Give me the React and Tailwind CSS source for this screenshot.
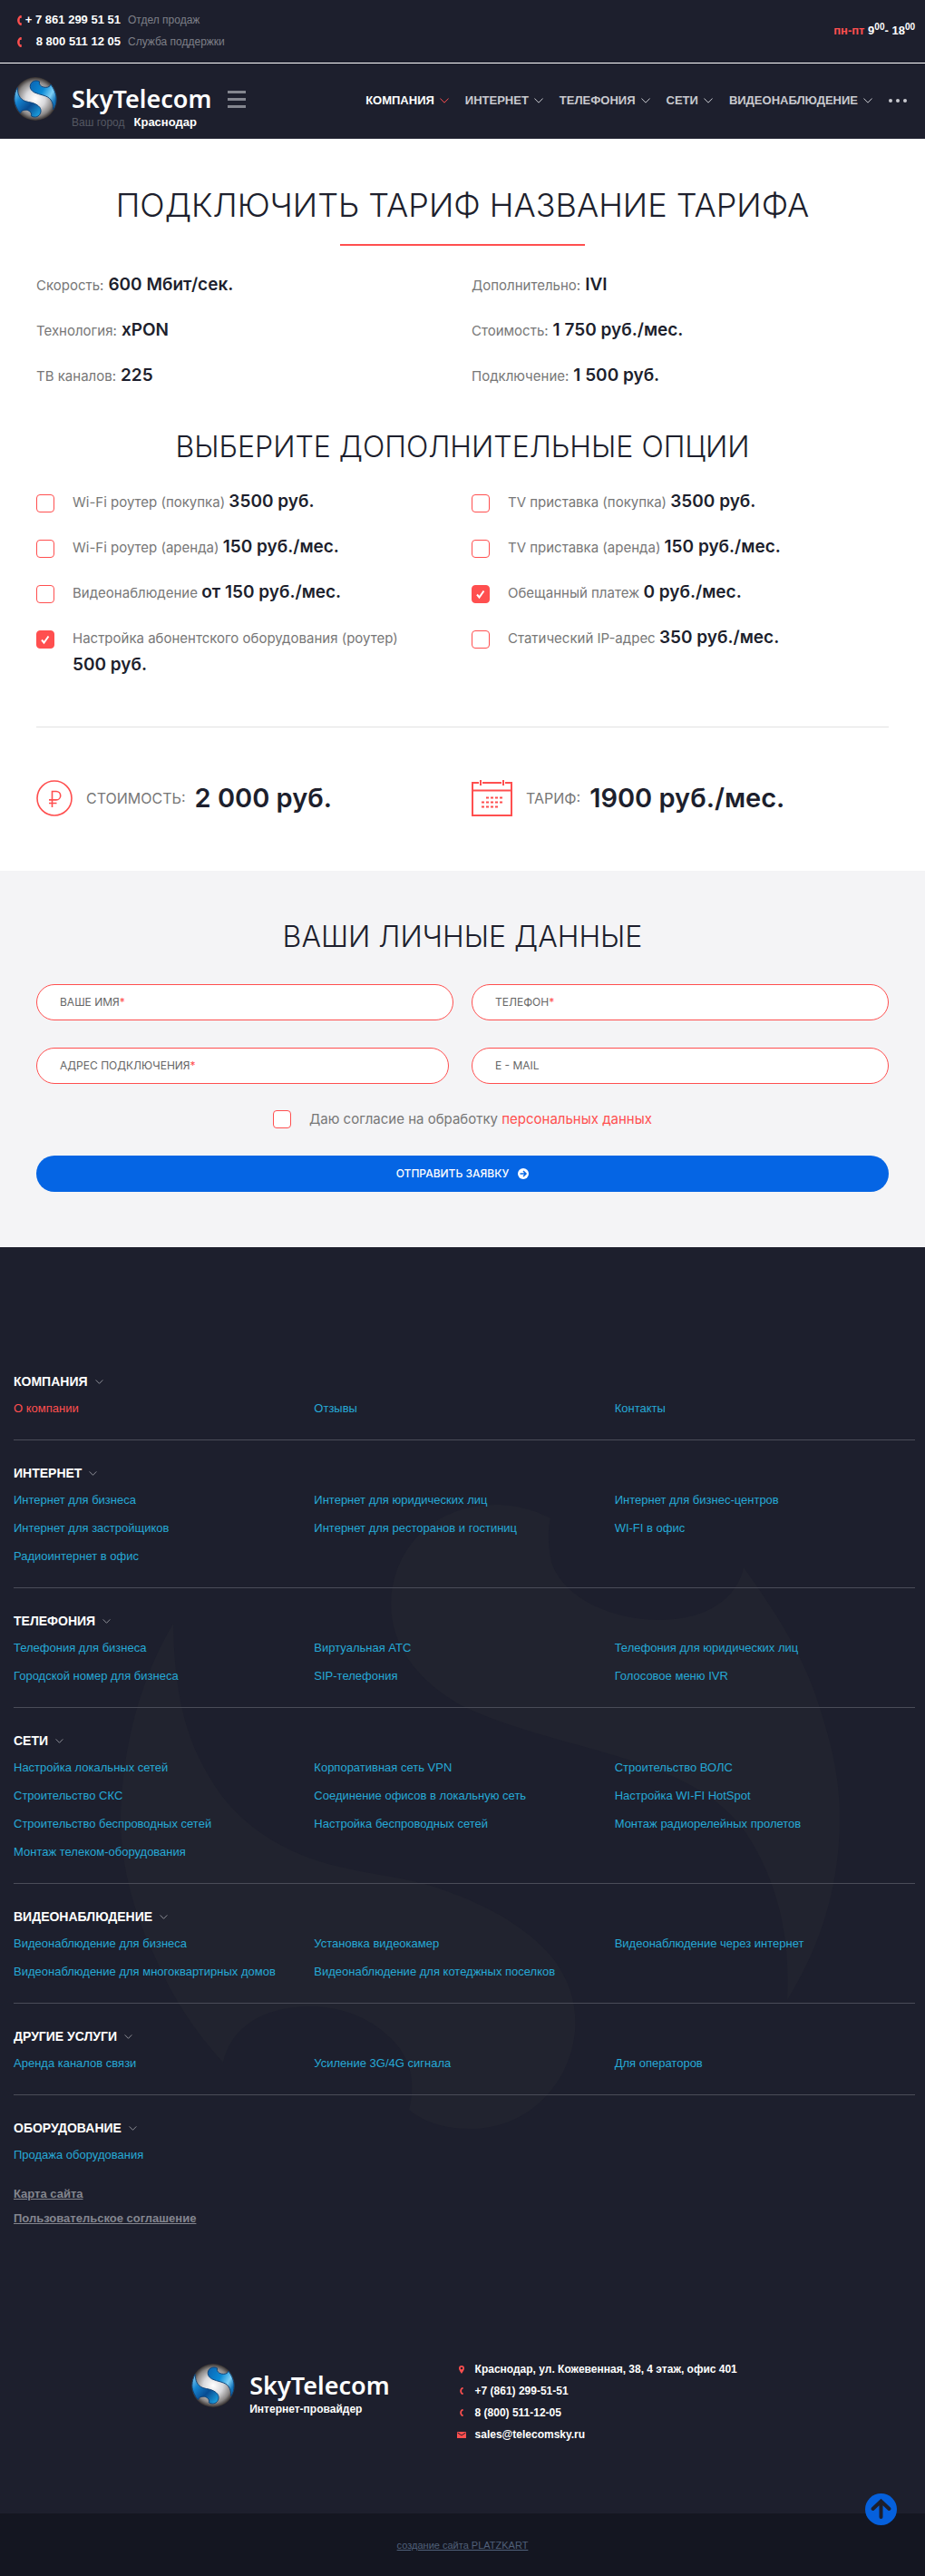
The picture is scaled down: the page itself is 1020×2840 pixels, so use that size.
import React, { useId } from "react";

const SWIRL_TOP =
  "M546 1659 C575 1659 596 1668 607 1674 C604 1686 604 1702 608 1722 C620 1760 672 1786 728 1786 C775 1786 812 1765 820 1728 C850 1770 880 1815 898 1865 C917 1920 926 1960 926 2003 C926 2080 905 2145 868 2205 C872 2130 855 2070 822 2020 C790 1975 740 1955 683 1937 C620 1918 560 1905 508 1880 C460 1852 431 1815 431 1767 C433 1705 480 1659 546 1659 Z";
const SWIRL_BOTTOM =
  "M191 1790 C192 1850 200 1900 221 1941 C245 1990 280 2025 340 2048 C385 2064 425 2066 468 2077 C520 2092 580 2120 612 2162 C630 2188 636 2212 634 2240 C628 2300 580 2347 520 2347 C490 2347 468 2340 451 2326 C460 2290 450 2262 425 2242 C403 2222 372 2212 342 2212 C295 2212 255 2232 246 2274 C215 2240 190 2202 172 2160 C148 2110 133 2060 133 2003 C135 1925 155 1850 191 1790 Z";

function Ball() {
  const id = useId();
  return (
    <svg viewBox="118 1591 824 824" className="h-12 w-12 shrink-0" aria-hidden="true">
      <defs>
        <radialGradient id={id + "s"} cx="0.5" cy="0.5" r="0.5">
          <stop offset="0" stopColor="#ffffff" />
          <stop offset="0.45" stopColor="#d9d9dc" />
          <stop offset="0.8" stopColor="#8b8887" />
          <stop offset="1" stopColor="#35302f" />
        </radialGradient>
        <linearGradient id={id + "t"} x1="0" y1="0" x2="1" y2="0.6">
          <stop offset="0" stopColor="#0b62b0" />
          <stop offset="0.5" stopColor="#0a8ad6" />
          <stop offset="0.8" stopColor="#7fd0f5" />
          <stop offset="1" stopColor="#1272b8" />
        </linearGradient>
        <linearGradient id={id + "b"} x1="0" y1="0" x2="1" y2="1">
          <stop offset="0" stopColor="#9adcf8" />
          <stop offset="0.3" stopColor="#1583cf" />
          <stop offset="0.6" stopColor="#084b91" />
          <stop offset="1" stopColor="#1fb0ee" />
        </linearGradient>
      </defs>
      <circle cx="530" cy="2003" r="410" fill={`url(#${id}s)`} />
      <path d={SWIRL_TOP} fill={`url(#${id}t)`} stroke="#0c3f75" strokeWidth="16" />
      <path d={SWIRL_BOTTOM} fill={`url(#${id}b)`} stroke="#0c3f75" strokeWidth="16" />
    </svg>
  );
}

function Chevron({ className }) {
  return (
    <svg viewBox="0 0 10 6" className={className} fill="none" stroke="currentColor" strokeWidth="1" aria-hidden="true">
      <path d="M0.4 0.5 L5 5.2 L9.6 0.5" />
    </svg>
  );
}

function Handset({ className }) {
  return (
    <svg viewBox="0 0 5 11" className={className} fill="#ff4f4f" aria-hidden="true">
      <path d="M3.4 0 L4.9 0.3 L4.6 2.9 L3 3.1 C2.5 4.6 2.5 6.4 3 7.9 L4.6 8.1 L4.9 10.7 L3.4 11 C-1 8.5 -1 2.5 3.4 0 Z" />
    </svg>
  );
}

const TICK =
  "checked:bg-[url('data:image/svg+xml,%3Csvg%20xmlns=%22http://www.w3.org/2000/svg%22%20viewBox=%220%200%2018%2018%22%3E%3Cpath%20d=%22M5%209.5l2.5%203%205-7%22%20fill=%22none%22%20stroke=%22white%22%20stroke-width=%222%22/%3E%3C/svg%3E')]";
const BOX =
  "h-5 w-5 shrink-0 appearance-none rounded-[4px] border border-[#ff4f4f] bg-white bg-center checked:bg-[#ff4f4f] " + TICK;

const NAV = ["КОМПАНИЯ", "ИНТЕРНЕТ", "ТЕЛЕФОНИЯ", "СЕТИ", "ВИДЕОНАБЛЮДЕНИЕ"];

const FACTS = [
  ["Скорость:", "600 Мбит/сек."],
  ["Дополнительно:", "IVI"],
  ["Технология:", "xPON"],
  ["Стоимость:", "1 750 руб./мес."],
  ["ТВ каналов:", "225"],
  ["Подключение:", "1 500 руб."],
];

const OPTIONS = [
  ["Wi-Fi роутер (покупка)", "3500 руб.", false],
  ["TV приставка (покупка)", "3500 руб.", false],
  ["Wi-Fi роутер (аренда)", "150 руб./мес.", false],
  ["TV приставка (аренда)", "150 руб./мес.", false],
  ["Видеонаблюдение", "от 150 руб./мес.", false],
  ["Обещанный платеж", "0 руб./мес.", true],
  ["Настройка абонентского оборудования (роутер)", "500 руб.", true],
  ["Статический IP-адрес", "350 руб./мес.", false],
];

const SITEMAP = [
  ["КОМПАНИЯ", ["О компании", "Отзывы", "Контакты"]],
  ["ИНТЕРНЕТ", ["Интернет для бизнеса", "Интернет для юридических лиц", "Интернет для бизнес-центров", "Интернет для застройщиков", "Интернет для ресторанов и гостиниц", "WI-FI в офис", "Радиоинтернет в офис"]],
  ["ТЕЛЕФОНИЯ", ["Телефония для бизнеса", "Виртуальная АТС", "Телефония для юридических лиц", "Городской номер для бизнеса", "SIP-телефония", "Голосовое меню IVR"]],
  ["СЕТИ", ["Настройка локальных сетей", "Корпоративная сеть VPN", "Строительство ВОЛС", "Строительство СКС", "Соединение офисов в локальную сеть", "Настройка WI-FI HotSpot", "Строительство беспроводных сетей", "Настройка беспроводных сетей", "Монтаж радиорелейных пролетов", "Монтаж телеком-оборудования"]],
  ["ВИДЕОНАБЛЮДЕНИЕ", ["Видеонаблюдение для бизнеса", "Установка видеокамер", "Видеонаблюдение через интернет", "Видеонаблюдение для многоквартирных домов", "Видеонаблюдение для котеджных поселков"]],
  ["ДРУГИЕ УСЛУГИ", ["Аренда каналов связи", "Усиление 3G/4G сигнала", "Для операторов"]],
  ["ОБОРУДОВАНИЕ", ["Продажа оборудования"]],
];

function Wordmark() {
  return <span className="block font-['Noto_Sans','Open_Sans',sans-serif] text-[27px] leading-8 font-semibold text-white">SkyTelecom</span>;
}

function Header() {
  return (
    <header className="bg-[#1d1f2d] font-['Liberation_Sans',Arial,sans-serif]">
      <div className="flex items-center justify-between border-b border-white pt-2.5 pr-[11px] pb-[11px] pl-[19px]">
        <div>
          <p className="flex h-6 items-center text-xs text-[#7d7f88]">
            <Handset className="h-[11px] w-[5px]" />
            <a href="#sales" className="w-[109px] text-right text-[13px] font-bold whitespace-nowrap text-white">+ 7 861 299 51 51</a>
            <span className="ml-2">Отдел продаж</span>
          </p>
          <p className="flex h-6 items-center text-xs text-[#7d7f88]">
            <Handset className="h-[11px] w-[5px]" />
            <a href="#support" className="w-[109px] text-right text-[13px] font-bold whitespace-nowrap text-white">8 800 511 12 05</a>
            <span className="ml-2">Служба поддержки</span>
          </p>
        </div>
        <p className="text-[13px] leading-5 font-bold text-white">
          <span className="text-[#ff4f4f]">пн-пт</span> 9<sup className="text-[10px]">00</sup>- 18<sup className="text-[10px]">00</sup>
        </p>
      </div>
      <div className="flex h-[83px] items-start justify-between pt-[15px] pr-5 pl-[15px]">
        <div className="flex">
          <Ball />
          <div className="ml-4 pt-2">
            <div className="flex items-center gap-[18px]">
              <Wordmark />
              <button type="button" aria-label="Меню" className="flex flex-col gap-[5px]">
                <span className="h-[3px] w-5 bg-[#84868f]" />
                <span className="h-[3px] w-5 bg-[#84868f]" />
                <span className="h-[3px] w-5 bg-[#84868f]" />
              </button>
            </div>
            <p className="flex items-center gap-2.5 text-xs leading-5 text-[#555862]">
              Ваш город
              <a href="#city" className="text-[13px] font-bold text-white">Краснодар</a>
            </p>
          </div>
        </div>
        <nav className="mt-4 flex h-5 items-center gap-[18px] text-[13px] font-bold">
          {NAV.map((n, i) => (
            <a key={n} href="#nav" className={i === 0 ? "flex items-center gap-1.5 text-white" : "flex items-center gap-1.5 text-[#c9cacf]"}>
              {n}
              <Chevron className={i === 0 ? "h-1.5 w-2.5 text-[#ff4f4f]" : "h-1.5 w-2.5"} />
            </a>
          ))}
          <button type="button" aria-label="Ещё" className="flex gap-1">
            <span className="h-1 w-1 rounded-full bg-[#c9cacf]" />
            <span className="h-1 w-1 rounded-full bg-[#c9cacf]" />
            <span className="h-1 w-1 rounded-full bg-[#c9cacf]" />
          </button>
        </nav>
      </div>
    </header>
  );
}

function Tariff() {
  return (
    <section className="px-10 pt-[49px] pb-[60px] text-[#1d1f2d]">
      <h1 className="text-center text-[36px] leading-[48px] font-light">ПОДКЛЮЧИТЬ ТАРИФ НАЗВАНИЕ ТАРИФА</h1>
      <div className="mx-auto mt-[19px] h-[2px] w-[270px] bg-[#ff4f4f]" />
      <dl className="mt-7 grid grid-cols-2 gap-x-5 gap-y-5">
        {FACTS.map(([k, v]) => (
          <div key={k} className="flex h-[30px] items-baseline gap-[5px] leading-[30px]">
            <dt className="text-[15px] text-[#777]">{k}</dt>
            <dd className="text-[19px] font-semibold">{v}</dd>
          </div>
        ))}
      </dl>
      <h2 className="mt-11 text-center text-[32px] leading-10 font-light">ВЫБЕРИТЕ ДОПОЛНИТЕЛЬНЫЕ ОПЦИИ</h2>
      <div className="mt-[26px] grid grid-cols-2 gap-x-5 gap-y-5">
        {OPTIONS.map(([k, v, on]) => (
          <label key={k} className="flex items-start gap-5 pr-12">
            <input type="checkbox" defaultChecked={on} className={BOX + " mt-[6px]"} />
            <span className="text-[15px] leading-[30px] text-[#777]">
              {k} <b className="text-[19px] leading-none font-semibold text-[#1d1f2d]">{v}</b>
            </span>
          </label>
        ))}
      </div>
      <hr className="mt-[52px] border-[#e2e2e2]" />
      <div className="mt-[58px] grid grid-cols-2 gap-x-5">
        <div className="flex h-10 items-center">
          <svg viewBox="0 0 40 40" className="h-10 w-10" fill="none" stroke="#ff4f4f" strokeWidth="1.6" aria-hidden="true">
            <circle cx="20" cy="20" r="19" />
            <path d="M17.5 30 V12.5 H22 a4.7 4.7 0 0 1 0 9.4 H14 M14 25.5 H22.5" />
          </svg>
          <span className="ml-[15px] text-base text-[#777]">СТОИМОСТЬ:</span>
          <b className="ml-2.5 text-[29px] font-semibold">2 000 руб.</b>
        </div>
        <div className="flex h-10 items-center">
          <svg viewBox="0 0 45 40" className="h-10 w-[45px]" fill="none" stroke="#ff4f4f" strokeWidth="2" aria-hidden="true">
            <path d="M8 3 H1 V39 H44 V3 H37 M12 3 H33 M1 11.5 H44 M10 0 V6 M35 0 V6" />
            <path d="M16 19.5 H36 M11 24.5 H36 M11 29.5 H31" strokeDasharray="3 2" />
          </svg>
          <span className="ml-[15px] text-base text-[#777]">ТАРИФ:</span>
          <b className="ml-2.5 text-[29px] font-semibold">1900 руб./мес.</b>
        </div>
      </div>
    </section>
  );
}

function Field({ id, label, required, type, className = "relative" }) {
  return (
    <div className={className}>
      <input id={id} type={type} placeholder=" " className="peer h-10 w-full rounded-full border border-[#ff4f4f] bg-white px-6 text-xs text-[#1d1f2d]" />
      <label htmlFor={id} className="pointer-events-none absolute inset-y-0 left-[26px] hidden items-center text-xs text-[#666] peer-placeholder-shown:flex">
        {label}
        {required && <span className="text-[#ff4f4f]">*</span>}
      </label>
    </div>
  );
}

function Request() {
  return (
    <form className="bg-[#f4f4f6] px-10 pt-[53px] pb-[61px]" onSubmit={(e) => e.preventDefault()}>
      <h2 className="text-center text-[32px] leading-10 font-light text-[#1d1f2d]">ВАШИ ЛИЧНЫЕ ДАННЫЕ</h2>
      <div className="mt-8 grid grid-cols-2 gap-x-5 gap-y-[30px]">
        <Field id="name" type="text" label="ВАШЕ ИМЯ" required />
        <Field id="phone" type="tel" label="ТЕЛЕФОН" required />
        <Field id="address" type="text" label="АДРЕС ПОДКЛЮЧЕНИЯ" required className="relative mr-[5px]" />
        <Field id="mail" type="email" label="E - MAIL" />
      </div>
      <div className="mt-[29px] flex items-center justify-center gap-5">
        <input id="agree" type="checkbox" className={BOX} />
        <label htmlFor="agree" className="text-[15px] leading-5 text-[#777]">
          Даю согласие на обработку <a href="#privacy" className="text-[#ff4f4f]">персональных данных</a>
        </label>
      </div>
      <button type="submit" className="mt-[30px] flex h-10 w-full items-center justify-center gap-2.5 rounded-full bg-[#0565e4] text-xs font-medium text-white">
        ОТПРАВИТЬ ЗАЯВКУ
        <svg viewBox="0 0 12 12" className="h-3 w-3" aria-hidden="true">
          <circle cx="6" cy="6" r="6" fill="#fff" />
          <path d="M2.5 6 H8.8 M6 3 L9 6 L6 9" fill="none" stroke="#0565e4" strokeWidth="1.5" />
        </svg>
      </button>
    </form>
  );
}

function Footer() {
  return (
    <footer className="relative bg-[#1d1f2d] font-['Liberation_Sans',Arial,sans-serif]">
      <svg viewBox="0 1375 1020 1395" className="absolute inset-x-0 top-0 w-full" fill="#21232f" aria-hidden="true">
        <path d={SWIRL_TOP} />
        <path d={SWIRL_BOTTOM} />
      </svg>
      <div className="relative pt-28 pr-[11px] pl-[15px]">
        {SITEMAP.map(([title, links], s) => (
          <section key={title} className={s < SITEMAP.length - 1 ? "border-b border-[#4a4c58] pt-[26px] pb-[19px]" : "pt-[26px] pb-[14px]"}>
            <h3 className="flex items-center gap-2 text-sm font-bold text-white">
              {title}
              <Chevron className="h-[5px] w-[9px] text-[#a4a5ac]" />
            </h3>
            <ul className="mt-1 grid grid-cols-3 text-[13px] leading-[31px]">
              {links.map((l, i) => (
                <li key={l}>
                  <a href="#page" className={s === 0 && i === 0 ? "text-[#ff4f4f]" : "text-[#26a9d6]"}>{l}</a>
                </li>
              ))}
            </ul>
          </section>
        ))}
        <ul className="text-[13px] leading-[27px] font-bold text-[#84868f] underline">
          <li><a href="#map">Карта сайта</a></li>
          <li><a href="#terms">Пользовательское соглашение</a></li>
        </ul>
        <div className="flex items-start justify-center gap-[74px] pt-[141px] pb-[75px]">
          <div className="flex pt-1.5">
            <Ball />
            <div className="ml-4 pt-2">
              <Wordmark />
              <p className="text-xs leading-5 font-bold text-white">Интернет-провайдер</p>
            </div>
          </div>
          <address className="grid grid-cols-[10px_auto] items-center gap-x-2.5 text-xs leading-6 font-bold text-white not-italic">
            <svg viewBox="0 0 6 9" className="mx-auto h-[9px] w-1.5" aria-hidden="true">
              <path fillRule="evenodd" fill="#ff4f4f" d="M3 0 a3 3 0 0 1 3 3 C6 5 4.2 7 3 9 C1.8 7 0 5 0 3 a3 3 0 0 1 3-3 Z M3 1.7 a1.3 1.3 0 1 0 0 2.6 a1.3 1.3 0 1 0 0-2.6 Z" />
            </svg>
            <span>Краснодар, ул. Кожевенная, 38, 4 этаж, офис 401</span>
            <Handset className="mx-auto h-2 w-1" />
            <a href="#tel1">+7 (861) 299-51-51</a>
            <Handset className="mx-auto h-2 w-1" />
            <a href="#tel2">8 (800) 511-12-05</a>
            <svg viewBox="0 0 10 7" className="h-[7px] w-2.5" aria-hidden="true">
              <path d="M0 0 H10 V7 H0 Z" fill="#ff4f4f" />
              <path d="M0.5 1 L5 4 L9.5 1" fill="none" stroke="#1d1f2d" strokeWidth="1" />
            </svg>
            <a href="#mail">sales@telecomsky.ru</a>
          </address>
        </div>
      </div>
      <div className="relative flex h-[70px] items-center justify-center bg-[#141621] text-[11px] text-[#50607a]">
        <a href="#studio" className="underline">создание сайта PLATZKART</a>
        <a href="#top" aria-label="Наверх" className="absolute -top-[22px] right-[31px]">
          <svg viewBox="0 0 35 35" className="h-[35px] w-[35px]" aria-hidden="true">
            <circle cx="17.5" cy="17.5" r="17.5" fill="#0560dc" />
            <path d="M17.5 26 V9 M8.5 17 L17.5 8.5 L26.5 17" fill="none" stroke="#1d1f2d" strokeWidth="4" strokeLinecap="round" />
          </svg>
        </a>
      </div>
    </footer>
  );
}

export default function App() {
  return (
    <div id="top" className="bg-white font-['Inter',sans-serif]">
      <Header />
      <main>
        <Tariff />
        <Request />
      </main>
      <Footer />
    </div>
  );
}
